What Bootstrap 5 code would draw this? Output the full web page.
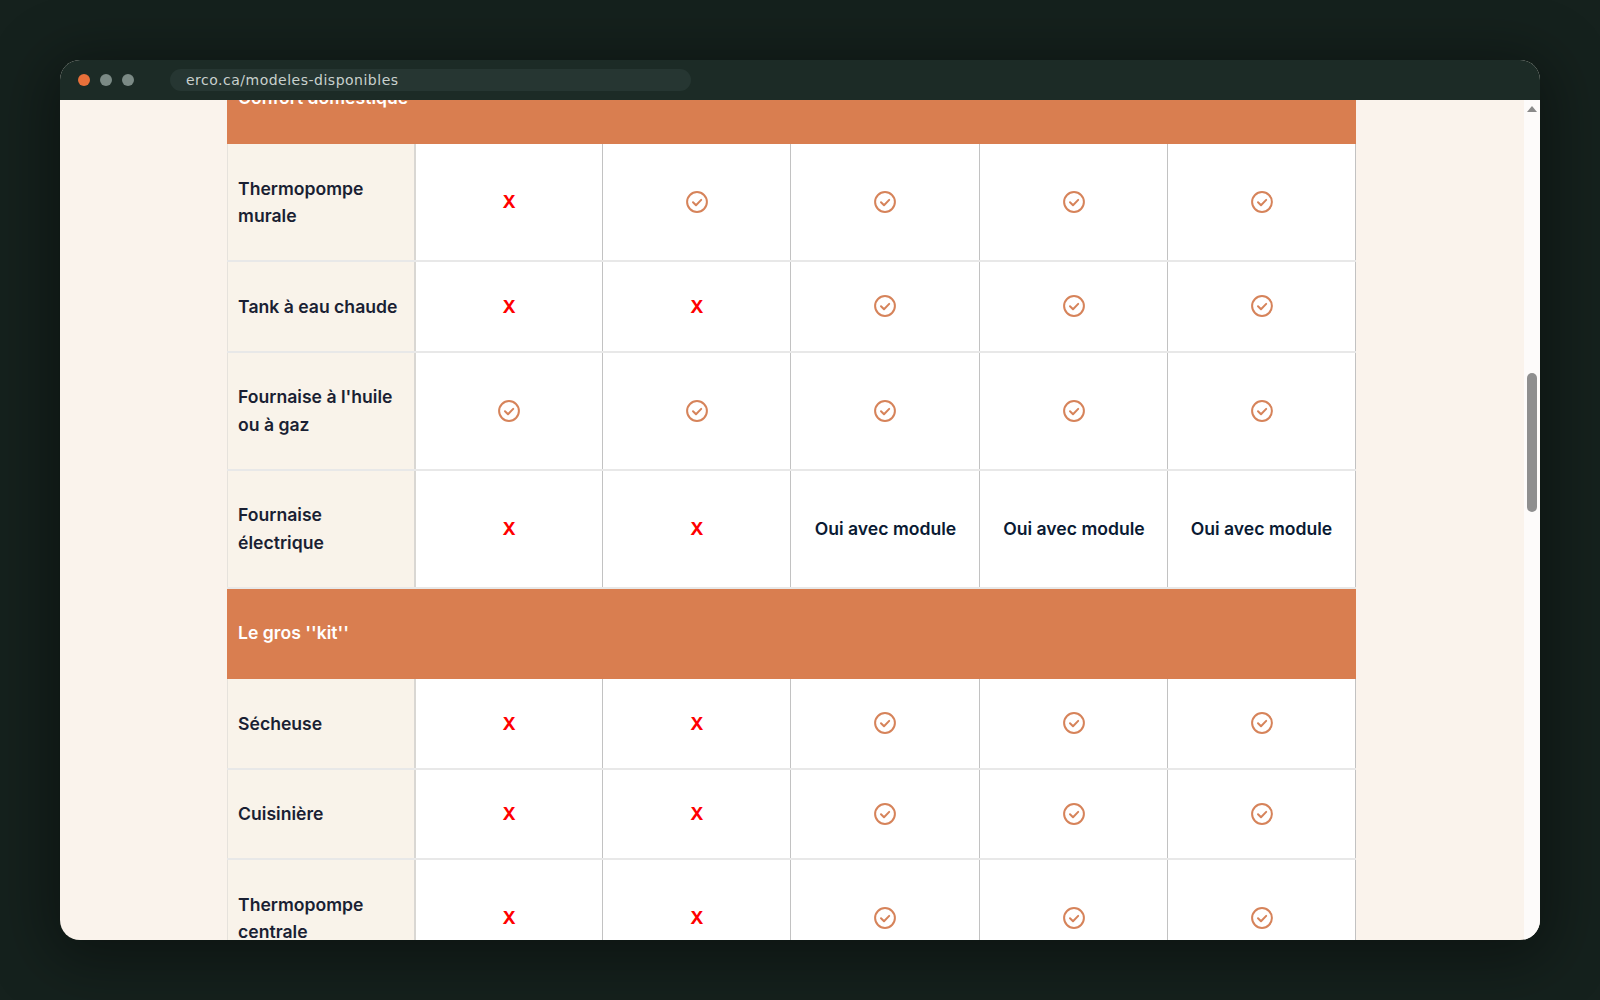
<!DOCTYPE html>
<html lang="fr">
<head>
<meta charset="utf-8">
<title>erco.ca/modeles-disponibles</title>
<link href="https://cdn.jsdelivr.net/npm/bootstrap@5.3.0/dist/css/bootstrap.min.css" rel="stylesheet">
<style>
html,body{height:100%;overflow:hidden}
body{background:#15211d;padding:60px;font-family:Inter,"Liberation Sans",sans-serif}
.win{width:1480px;height:880px;border-radius:20px;overflow:hidden;box-shadow:0 10px 60px 12px rgba(0,0,0,.38);background:#faf3ec}
.chrome{height:40px;background:#1c2b26;padding-left:18px;gap:10px;flex:none}
.dot{width:12px;height:12px;border-radius:50%;background:#7b8a85}
.dot-on{background:#e8703a}
.addr{margin-left:26px;width:521px;height:22px;border-radius:11px;background:#263632;color:#c9d1ce;font-family:"DejaVu Sans",sans-serif;font-size:14px;letter-spacing:.5px;padding-left:16px;line-height:22px;white-space:nowrap}
.view{min-height:0}
.pagearea{overflow:hidden;min-width:0;padding-right:1px}
.sbar{width:16px;background:#fdfbfa;flex:none;padding-top:6px}
.sbar-up{width:0;height:0;border-left:5px solid transparent;border-right:5px solid transparent;border-bottom:6px solid #8a8a8a;margin:0 0 0 3px}
.sbar-thumb{width:10px;height:139px;margin:261px 0 0 3px;border-radius:5px;background:#8f8f8f}
.cmp{width:1127px;margin-top:-48.4px;table-layout:fixed;border-collapse:collapse;background:#fff}
.cmp td{border-style:solid;border-width:2px 1px;border-color:#e8e8e8 #c2c2c2;padding:30.45px 9.6px;font-size:17.6px;line-height:27.6px;font-weight:600;color:#0a1a33;text-align:center;vertical-align:middle;background:#fff}
.cmp td.lab{text-align:left;background:#f9f3ea;color:#1a1f33;border-left-color:#e6e2dc;border-right:2px solid #d9d7d3}
.cmp td.sec{text-align:left;background:#d97e50;color:#fff;border-color:#d97e50}
.no{color:#f00;font-weight:700;font-size:18px}
.ok{width:22px;height:22px;display:block;margin:0 auto;fill:none;stroke:#d6835a;stroke-width:2;stroke-linecap:round;stroke-linejoin:round}
</style>
</head>
<body>
<svg width="0" height="0" class="d-none"><symbol id="chk" viewBox="0 0 22 22"><circle cx="11" cy="11" r="9.9"/><path d="M7 11.3l3 3 5.2-5.4"/></symbol></svg>
<div class="win d-flex flex-column">
  <div class="chrome d-flex align-items-center">
    <span class="dot dot-on"></span><span class="dot"></span><span class="dot"></span>
    <div class="addr">erco.ca/modeles-disponibles</div>
  </div>
  <div class="view d-flex flex-grow-1">
    <div class="pagearea flex-grow-1">
      <table class="cmp mx-auto mb-0">
        <colgroup><col style="width:187px"><col style="width:188px"><col style="width:188px"><col style="width:189px"><col style="width:188px"><col style="width:187px"></colgroup>
        <tr><td class="sec" colspan="6">Confort domestique</td></tr>
        <tr><td class="lab">Thermopompe murale</td><td><span class="no">X</span></td><td><svg class="ok"><use href="#chk"/></svg></td><td><svg class="ok"><use href="#chk"/></svg></td><td><svg class="ok"><use href="#chk"/></svg></td><td><svg class="ok"><use href="#chk"/></svg></td></tr>
        <tr><td class="lab">Tank à eau chaude</td><td><span class="no">X</span></td><td><span class="no">X</span></td><td><svg class="ok"><use href="#chk"/></svg></td><td><svg class="ok"><use href="#chk"/></svg></td><td><svg class="ok"><use href="#chk"/></svg></td></tr>
        <tr><td class="lab">Fournaise à l'huile ou à gaz</td><td><svg class="ok"><use href="#chk"/></svg></td><td><svg class="ok"><use href="#chk"/></svg></td><td><svg class="ok"><use href="#chk"/></svg></td><td><svg class="ok"><use href="#chk"/></svg></td><td><svg class="ok"><use href="#chk"/></svg></td></tr>
        <tr><td class="lab">Fournaise électrique</td><td><span class="no">X</span></td><td><span class="no">X</span></td><td>Oui avec module</td><td>Oui avec module</td><td>Oui avec module</td></tr>
        <tr><td class="sec" colspan="6">Le gros ''kit''</td></tr>
        <tr><td class="lab">Sécheuse</td><td><span class="no">X</span></td><td><span class="no">X</span></td><td><svg class="ok"><use href="#chk"/></svg></td><td><svg class="ok"><use href="#chk"/></svg></td><td><svg class="ok"><use href="#chk"/></svg></td></tr>
        <tr><td class="lab">Cuisinière</td><td><span class="no">X</span></td><td><span class="no">X</span></td><td><svg class="ok"><use href="#chk"/></svg></td><td><svg class="ok"><use href="#chk"/></svg></td><td><svg class="ok"><use href="#chk"/></svg></td></tr>
        <tr><td class="lab">Thermopompe centrale</td><td><span class="no">X</span></td><td><span class="no">X</span></td><td><svg class="ok"><use href="#chk"/></svg></td><td><svg class="ok"><use href="#chk"/></svg></td><td><svg class="ok"><use href="#chk"/></svg></td></tr>
      </table>
    </div>
    <div class="sbar"><div class="sbar-up"></div><div class="sbar-thumb"></div></div>
  </div>
</div>
<script src="https://cdn.jsdelivr.net/npm/bootstrap@5.3.0/dist/js/bootstrap.bundle.min.js"></script>
</body>
</html>
